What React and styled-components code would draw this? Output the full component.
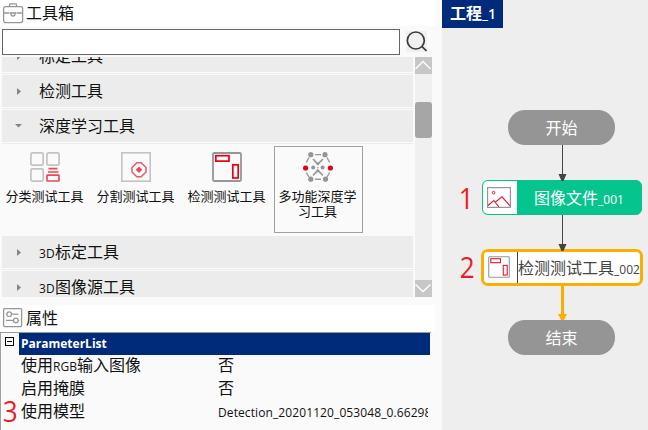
import React from "react";
import styled, { createGlobalStyle } from "styled-components";

const Global = createGlobalStyle`
  * { box-sizing: border-box; }
  body { margin: 0; background: #fafafa; overflow: hidden; }
`;

const Page = styled.div`
  display: flex;
  width: 648px;
  height: 430px;
  overflow: hidden;
  background: #fafafa;
  color: #111;
  font-family: "Noto Sans CJK SC", sans-serif;
  font-size: 16px;
  white-space: nowrap;
`;

const Sidebar = styled.div`
  position: relative;
  display: flex;
  flex-direction: column;
  width: 435px;
  margin-right: 7px;
`;

const PanelHeader = styled.div`
  display: flex;
  align-items: center;
  gap: ${(p) => p.$gap || 2}px;
  flex: none;
  height: ${(p) => p.$height}px;
  padding: 0 0 ${(p) => p.$bottom || 0}px 2px;
  background: #fff;
  line-height: 24px;
  svg { display: block; flex: none; }
`;

const HeaderText = styled.span`
  padding-bottom: 2px;
`;

const SearchRow = styled.div`
  display: flex;
  flex: none;
  height: 31px;
  padding: 3px 0 0 2px;
  gap: 6px;
`;

const SearchInput = styled.input`
  width: 398px;
  height: 26px;
  padding: 0 4px;
  border: 1px solid #666;
  border-radius: 0;
  background: #fff;
  outline: none;
`;

const SearchButton = styled.button`
  width: 21px;
  height: 21px;
  margin-top: 2px;
  padding: 0;
  border: 0;
  background: #f0f0f0;
  svg { display: block; }
`;

const ListArea = styled.div`
  display: flex;
  flex: none;
  gap: 2px;
  height: 240px;
  margin-left: 2px;
`;

const List = styled.div`
  display: flex;
  flex-direction: column;
  justify-content: flex-end;
  width: 411px;
  height: 240px;
  overflow: hidden;
`;

const Category = styled.div`
  display: flex;
  align-items: center;
  flex: none;
  height: ${(p) => p.$height || 32}px;
  margin-bottom: ${(p) => (p.$last ? 0 : 3)}px;
  background: #ececec;
  box-shadow: ${(p) => (p.$last ? "none" : "0 1px #fafafa, 0 2px #ececec")};
  overflow: hidden;
`;

const CategoryInner = styled.div`
  display: flex;
  align-items: center;
  align-self: ${(p) => (p.$from === "bottom" ? "flex-end" : "flex-start")};
  flex: none;
  width: 100%;
  height: 32px;
  padding-left: 13px;
  line-height: 30px;
  svg { display: block; flex: none; margin-right: 16px; }
`;

const CategoryText = styled.span`
  height: 32px;
`;

const Latin = styled.span`
  font-family: "Open Sans", sans-serif;
  font-size: ${(p) => p.$size || 12}px;
  letter-spacing: ${(p) => p.$spacing || 0}px;
`;

const Tools = styled.div`
  display: flex;
  align-items: flex-start;
  gap: 2px;
  flex: none;
  height: 91px;
  padding-top: 1px;
  margin-left: -1px;
`;

const Tool = styled.div`
  display: flex;
  flex-direction: column;
  align-items: center;
  width: 89px;
  height: 87px;
  padding: 5px 2px 0 0;
  border: 1px solid ${(p) => (p.$selected ? "#a0a0a0" : "transparent")};
  svg { display: block; flex: none; }
`;

const ToolLabel = styled.div`
  width: 80px;
  margin-top: 7px;
  font-size: 13px;
  line-height: 14.5px;
  text-align: center;
  white-space: normal;
`;

const Scrollbar = styled.div`
  display: flex;
  flex-direction: column;
  width: 17px;
  background: #f0f0f0;
`;

const ScrollButton = styled.div`
  flex: none;
  height: 17px;
  background: #c8c6c7;
  svg { display: block; }
`;

const Track = styled.div`
  flex: 1;
  padding-top: 28px;
`;

const Thumb = styled.div`
  height: 36px;
  border-radius: 3px;
  background: #a6a6a6;
`;

const Gap = styled.div`
  flex: none;
  height: 8px;
`;

const PropertyGrid = styled.div`
  display: flex;
  width: 431px;
  height: 98px;
  border-top: 1px solid #999;
  border-left: 1px solid #a0a0a0;
`;

const Gutter = styled.div`
  flex: none;
  width: 18px;
  padding: 4px 0 0 4px;
  svg { display: block; }
`;

const PropertyRows = styled.div`
  width: 411px;
`;

const GroupTitle = styled.div`
  height: 22px;
  padding-left: 2px;
  background: #002a7a;
  color: #fff;
  font: bold 12px/21px "Open Sans", sans-serif;
`;

const Property = styled.div`
  display: grid;
  grid-template-columns: 197px 210px;
  height: 23px;
  padding-left: 2px;
  line-height: 19px;
`;

const Value = styled.div`
  height: 23px;
  overflow-x: clip;
`;

const Mark = styled.div`
  position: absolute;
  left: ${(p) => p.$x}px;
  top: ${(p) => p.$y}px;
  color: #ed1c24;
  font: 29px/30px "Open Sans", sans-serif;
  transform: scaleX(0.9);
`;

const Canvas = styled.div`
  position: relative;
  flex: 1;
  background: #eeeeee;
`;

const Tab = styled.div`
  width: 61px;
  height: 28px;
  padding-left: 8px;
  background: #002a7a;
  color: #fff;
  font-weight: 600;
  line-height: 24px;
`;

const Wires = styled.svg`
  position: absolute;
  left: 0;
  top: 0;
`;

const Terminal = styled.div`
  position: absolute;
  left: 66px;
  top: ${(p) => p.$y}px;
  width: 107px;
  height: 35px;
  border-radius: 17px;
  background: #959595;
  color: #fff;
  text-align: center;
  line-height: 35px;
`;

const FileNode = styled.div`
  position: absolute;
  left: 40px;
  top: 180px;
  display: flex;
  width: 160px;
  height: 35px;
  border: 1px solid #06c48d;
  border-radius: 6px;
  overflow: hidden;
  background: #06c48d;
  color: #fff;
`;

const DetectNode = styled(FileNode)`
  left: 39px;
  top: 249px;
  width: 162px;
  height: 37px;
  border: 3px solid #faae00;
  border-radius: 7px;
  background: #fff;
  color: #444;
`;

const NodeIcon = styled.div`
  flex: none;
  width: 34px;
  padding: ${(p) => (p.$divided ? "4px 0 0 4px" : "6px 0 0 4px")};
  border-right: ${(p) => (p.$divided ? "1px solid #444" : "0")};
  background: #fff;
  svg { display: block; }
`;

const NodeLabel = styled.div`
  padding-left: ${(p) => p.$pad}px;
  line-height: ${(p) => p.$line}px;
`;

function Caret({ open }) {
  return (
    <svg width="8" height="8" viewBox="0 0 8 8" fill="#858585">
      {open ? <path d="M0 2h7L3.5 5.5z" /> : <path d="M2 1v7l4-3.5z" />}
    </svg>
  );
}

function ToolboxIcon() {
  return (
    <svg width="22" height="21" viewBox="0 0 22 21" fill="none" stroke="#969696" strokeWidth="1.3">
      <rect x="1.6" y="3.6" width="19" height="16" rx="2" />
      <path d="M7.5 3.5v-2q0-.7.8-.7h5.5q.7 0 .7.7v2M1.6 10h5.9M14.5 10h6.1M8 10h6M9 10v1a2 2 0 0 0 4 0v-1" />
    </svg>
  );
}

function SettingsIcon() {
  return (
    <svg width="21" height="21" viewBox="0 0 21 21" fill="none" stroke="#969696">
      <rect x="1.6" y="1.6" width="18" height="18" rx="1" strokeWidth="1.3" />
      <circle cx="7.2" cy="7.2" r="2.3" strokeWidth="1.2" />
      <circle cx="13.8" cy="13.4" r="2.3" strokeWidth="1.2" />
      <path d="M3.8 7.2h1M9.6 7.2h6.8M3.8 13.4h7.5M16.2 13.4h1" strokeWidth="1.2" />
    </svg>
  );
}

function SearchIcon() {
  return (
    <svg width="21" height="21" viewBox="0 0 21 21" fill="none" stroke="#3a3a3a" strokeWidth="1.7">
      <circle cx="9.8" cy="9.5" r="8.5" />
      <path d="M15.8 15.3l4.7 4.7" />
    </svg>
  );
}

function Chevron({ down }) {
  return (
    <svg width="17" height="17" viewBox="0 0 17 17" fill="none" stroke="#fff" strokeWidth="1.4">
      <path d={down ? "M.5 4.5l7.5 7 7.5-7" : "M.5 12l7.5-7.5 7.5 7.5"} />
    </svg>
  );
}

function ClassifyIcon() {
  return (
    <svg width="30" height="30" viewBox="0 0 30 30" fill="none" stroke="#c3c3c3" strokeWidth="1.7">
      <rect x=".9" y=".9" width="12.3" height="12.3" rx="1.5" />
      <rect x="16.9" y=".9" width="12.2" height="12.3" rx="1.5" />
      <rect x=".9" y="16.9" width="12.3" height="12.2" rx="1.5" />
      <g stroke="#e94a56">
        <path d="M18.5 16.7h9M18 20h10.5" />
        <rect x="17" y="23.2" width="12" height="5.8" rx=".5" />
      </g>
    </svg>
  );
}

function SegmentIcon() {
  return (
    <svg width="30" height="30" viewBox="0 0 30 30" fill="none">
      <rect x=".8" y=".8" width="28.4" height="28.4" stroke="#c3c3c3" strokeWidth="1.6" />
      <path d="M15.8 10.7h4.4L25 15.6v4.4l-4.8 4.8h-4.4L11 20v-4.4z" stroke="#ea5a65" strokeWidth="1.5" />
      <path d="M18 14.5l3.3 3.3-3.3 3.3-3.3-3.3z" fill="#e94a56" />
    </svg>
  );
}

function DetectIcon({ size = 30, thin }) {
  return (
    <svg width={size} height={size} viewBox="0 0 30 30" fill="none">
      <rect x="1" y="1" width="28" height="28" rx="1.2" stroke="#969696" strokeWidth={thin ? 1.5 : 1.8} />
      <g stroke={thin ? "#e3192d" : "#e60012"} strokeWidth={thin ? 1.5 : 1.7}>
        <rect x="3.8" y="3.7" width="13.2" height="5.4" />
        <rect x="20.8" y="12.8" width="5.4" height="13.2" />
      </g>
    </svg>
  );
}

function NetworkIcon() {
  return (
    <svg width="30" height="30" viewBox="0 0 30 30">
      <g stroke="#999" strokeWidth="1.4" fill="none">
        <path d="M12 2.6h6M12 27.3h6" />
        <path d="M6 5.5L3.3 10.5M24 5.5l2.7 5M3.3 20.5L6 25M26.7 20.5L24 25" />
        <path d="M10 7l4.8 5.2L20 7M10 23.5l4.8-5.2 5.2 5.2" strokeWidth="1.7" />
      </g>
      <g fill="#969696">
        <circle cx="7.8" cy="2.7" r="2.6" /><circle cx="22" cy="2.7" r="2.6" />
        <circle cx="7.8" cy="27.2" r="2.6" /><circle cx="22.5" cy="27.2" r="2.6" />
        <circle cx="10.2" cy="15.4" r="2" /><circle cx="19.6" cy="15.4" r="2" />
        <circle cx="14.9" cy="11.8" r="1.4" /><circle cx="14.9" cy="18.8" r="1.4" />
        <circle cx="14.9" cy="15.7" r=".8" />
      </g>
      <circle cx="2.6" cy="16" r="2.6" fill="#e60012" />
      <circle cx="27.4" cy="16" r="2.6" fill="#e60012" />
    </svg>
  );
}

function ImageIcon() {
  return (
    <svg width="24" height="21" viewBox="0 0 24 21" fill="none">
      <rect x=".6" y=".6" width="22.8" height="19.8" stroke="#969696" strokeWidth="1.2" />
      <circle cx="6.6" cy="5.7" r="1.3" stroke="#e3192d" />
      <path d="M1 18.5l5.8-5 5.2 6.5M8.5 15l6.5-5.2 8 9" stroke="#e3192d" strokeWidth="1.1" />
    </svg>
  );
}

const tools = [
  { label: "分类测试工具", Icon: ClassifyIcon },
  { label: "分割测试工具", Icon: SegmentIcon },
  { label: "检测测试工具", Icon: DetectIcon },
  { label: "多功能深度学习工具", Icon: NetworkIcon, selected: true },
];

function CategoryRow({ children, open, height, from, last }) {
  return (
    <Category $height={height} $last={last}>
      <CategoryInner $from={from}>
        <Caret open={open} />
        <CategoryText>{children}</CategoryText>
      </CategoryInner>
    </Category>
  );
}

export default function App() {
  return (
    <Page>
      <Global />
      <Sidebar>
        <PanelHeader $height={26}><ToolboxIcon /><HeaderText>工具箱</HeaderText></PanelHeader>
        <SearchRow>
          <SearchInput />
          <SearchButton><SearchIcon /></SearchButton>
        </SearchRow>
        <ListArea>
          <List>
            <CategoryRow height={15} from="bottom">标定工具</CategoryRow>
            <CategoryRow>检测工具</CategoryRow>
            <CategoryRow open>深度学习工具</CategoryRow>
            <Tools>
              {tools.map(({ label, Icon, selected }) => (
                <Tool key={label} $selected={selected}>
                  <Icon />
                  <ToolLabel>{label}</ToolLabel>
                </Tool>
              ))}
            </Tools>
            <CategoryRow><Latin $spacing={0.2}>3D</Latin>标定工具</CategoryRow>
            <CategoryRow height={26} last><Latin $spacing={0.2}>3D</Latin>图像源工具</CategoryRow>
          </List>
          <Scrollbar>
            <ScrollButton><Chevron /></ScrollButton>
            <Track><Thumb /></Track>
            <ScrollButton><Chevron down /></ScrollButton>
          </Scrollbar>
        </ListArea>
        <Gap />
        <PanelHeader $height={27} $bottom={2} $gap={3}><SettingsIcon /><HeaderText>属性</HeaderText></PanelHeader>
        <PropertyGrid>
          <Gutter>
            <svg width="9" height="9" viewBox="0 0 9 9" fill="none" stroke="#000">
              <rect x=".5" y=".5" width="8" height="8" />
              <path d="M2 4.5h5" />
            </svg>
          </Gutter>
          <PropertyRows>
            <GroupTitle>ParameterList</GroupTitle>
            <Property><div>使用<Latin>RGB</Latin>输入图像</div><Value>否</Value></Property>
            <Property><div>启用掩膜</div><Value>否</Value></Property>
            <Property>
              <div>使用模型</div>
              <Value><Latin $spacing={0.1}>Detection_20201120_053048_0.66298</Latin></Value>
            </Property>
          </PropertyRows>
        </PropertyGrid>
        <Mark $x={2} $y={396}>3</Mark>
      </Sidebar>
      <Canvas>
        <Tab>工程<Latin $size={14}>_1</Latin></Tab>
        <Terminal $y={110}>开始</Terminal>
        <FileNode>
          <NodeIcon><ImageIcon /></NodeIcon>
          <NodeLabel $pad={17} $line={32}>图像文件<Latin>_001</Latin></NodeLabel>
        </FileNode>
        <DetectNode>
          <NodeIcon $divided><DetectIcon size={22} thin /></NodeIcon>
          <NodeLabel $pad={0} $line={30}>检测测试工具<Latin>_002</Latin></NodeLabel>
        </DetectNode>
        <Terminal $y={320}>结束</Terminal>
        <Wires width="206" height="430" viewBox="0 0 206 430">
          <path d="M120.5 145v30M120.5 215v30" stroke="#444" />
          <path d="M116.5 174h8l-3 7h-2zM116.5 244h8l-3 7h-2z" fill="#444" />
          <path d="M120.5 286v28" stroke="#faae00" strokeWidth="3" />
          <path d="M116 314h9l-3 6h-3z" fill="#faae00" />
        </Wires>
        <Mark $x={16} $y={183}>1</Mark>
        <Mark $x={17} $y={252}>2</Mark>
      </Canvas>
    </Page>
  );
}
